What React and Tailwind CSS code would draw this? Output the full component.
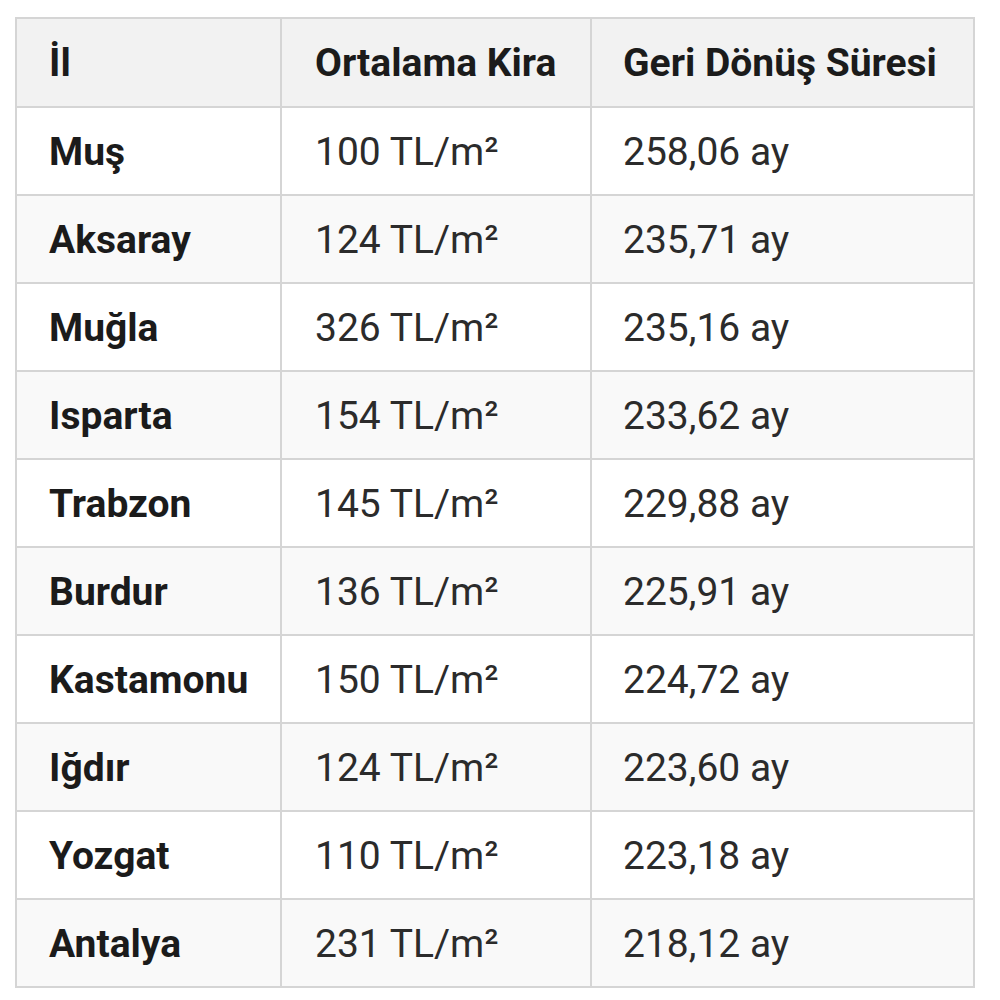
export default function App() {
    const rows = [
        { il: "Muş", kira: "100 TL/m²", sure: "258,06 ay" },
        { il: "Aksaray", kira: "124 TL/m²", sure: "235,71 ay" },
        { il: "Muğla", kira: "326 TL/m²", sure: "235,16 ay" },
        { il: "Isparta", kira: "154 TL/m²", sure: "233,62 ay" },
        { il: "Trabzon", kira: "145 TL/m²", sure: "229,88 ay" },
        { il: "Burdur", kira: "136 TL/m²", sure: "225,91 ay" },
        { il: "Kastamonu", kira: "150 TL/m²", sure: "224,72 ay" },
        { il: "Iğdır", kira: "124 TL/m²", sure: "223,60 ay" },
        { il: "Yozgat", kira: "110 TL/m²", sure: "223,18 ay" },
        { il: "Antalya", kira: "231 TL/m²", sure: "218,12 ay" },
    ];

    return (
        <div className="w-[1000px] h-[1000px] bg-white pt-[17px] pl-[15px] font-['Roboto',sans-serif]">
            <table className="border-collapse table-fixed w-[958px] text-[39px] leading-none">
                <colgroup>
                    <col className="w-[265px]" />
                    <col className="w-[310px]" />
                    <col className="w-[383px]" />
                </colgroup>
                <thead>
                    <tr className="bg-[#f2f2f2] h-[89px]">
                        <th className="border-2 border-[#d5d5d5] pl-[32px] pt-[2px] text-left font-bold text-[#1b1b1b]">İl</th>
                        <th className="border-2 border-[#d5d5d5] pl-[33px] pt-[2px] text-left font-bold text-[#1b1b1b]">Ortalama Kira</th>
                        <th className="border-2 border-[#d5d5d5] pl-[31px] pt-[2px] text-left font-bold text-[#1b1b1b]">Geri Dönüş Süresi</th>
                    </tr>
                </thead>
                <tbody>
                    {rows.map((r, i) => (
                        <tr key={r.il} className={i % 2 === 1 ? "bg-[#f9f9f9] h-[88px]" : "bg-white h-[88px]"}>
                            <td className="border-2 border-[#d5d5d5] pl-[32px] pt-[2px] font-bold text-[#1b1b1b]">{r.il}</td>
                            <td className="border-2 border-[#d5d5d5] pl-[33px] pt-[2px] text-[#2b2b2b]">{r.kira}</td>
                            <td className="border-2 border-[#d5d5d5] pl-[31px] pt-[2px] text-[#2b2b2b]">{r.sure}</td>
                        </tr>
                    ))}
                </tbody>
            </table>
        </div>
    );
}
